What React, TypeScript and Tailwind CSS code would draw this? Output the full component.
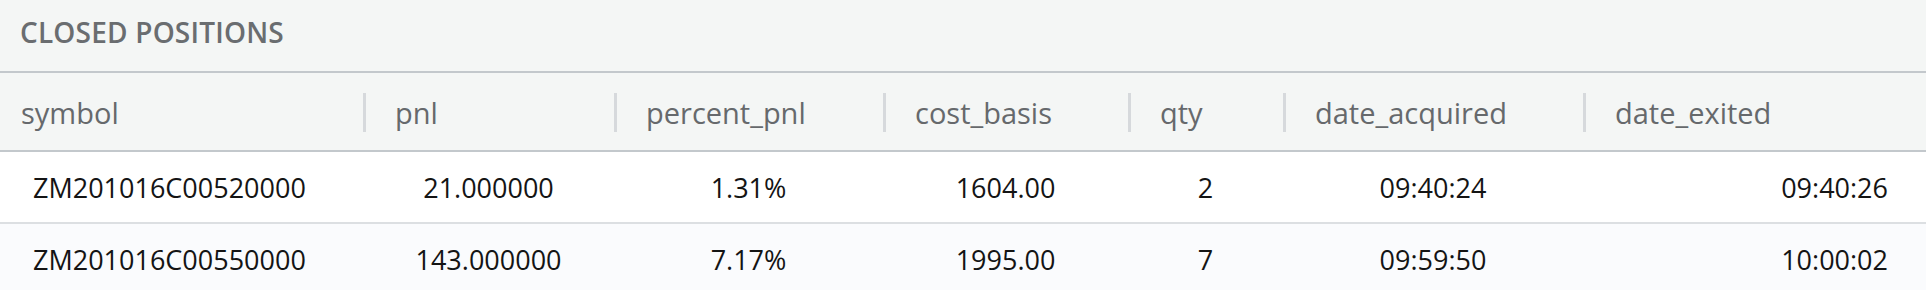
const COLUMNS = [
  { key: "symbol", width: "w-[363px]" },
  { key: "pnl", width: "w-[251px]" },
  { key: "percent_pnl", width: "w-[269px]" },
  { key: "cost_basis", width: "w-[245px]" },
  { key: "qty", width: "w-[155px]" },
  { key: "date_acquired", width: "w-[300px]" },
  { key: "date_exited", width: "flex-1" },
];

const ROWS = [
  ["ZM201016C00520000", "21.000000", "1.31%", "1604.00", "2", "09:40:24", "09:40:26"],
  ["ZM201016C00550000", "143.000000", "7.17%", "1995.00", "7", "09:59:50", "10:00:02"],
];

function cellAlign(i: number) {
  if (i === 0) return "justify-start pl-[33px]";
  if (i === COLUMNS.length - 1) return "justify-end pr-[38px]";
  return "justify-center";
}

export default function App() {
  return (
    <div
      className="w-[1926px] h-[290px] overflow-hidden bg-white"
      style={{ fontFamily: '"Open Sans", "Noto Sans", sans-serif' }}
    >
      {/* Title */}
      <div className="h-[71px] bg-[#f4f6f5] pl-[20px] pt-[18px]">
        <div className="text-[28px] leading-[28px] font-semibold text-[#6a6d70] tracking-[0.2px]">
          CLOSED POSITIONS
        </div>
      </div>

      {/* Header */}
      <div className="flex h-[81px] bg-[#f4f6f5] border-t-2 border-b-2 border-[#c3c8cc]">
        {COLUMNS.map((c, i) => (
          <div key={c.key} className={`${c.width} flex shrink-0`}>
            {i > 0 && <div className="w-[3px] h-[39px] mt-[20px] bg-[#d6d9dc]" />}
            <div
              className={`pt-[25px] text-[29px] leading-[29px] text-[#66696c] ${
                i === 0 ? "pl-[21px]" : "pl-[29px]"
              }`}
            >
              {c.key}
            </div>
          </div>
        ))}
      </div>

      {/* Rows */}
      {ROWS.map((row, r) => (
        <div
          key={r}
          className={`flex h-[72px] ${
            r === 0 ? "bg-white border-b-2 border-[#dcdfe2]" : "bg-[#fafbfd]"
          }`}
        >
          {row.map((v, i) => (
            <div
              key={i}
              className={`${COLUMNS[i].width} shrink-0 flex pt-[22px] text-[27px] leading-[27px] text-[#141414] ${cellAlign(i)}`}
            >
              {v}
            </div>
          ))}
        </div>
      ))}
    </div>
  );
}
